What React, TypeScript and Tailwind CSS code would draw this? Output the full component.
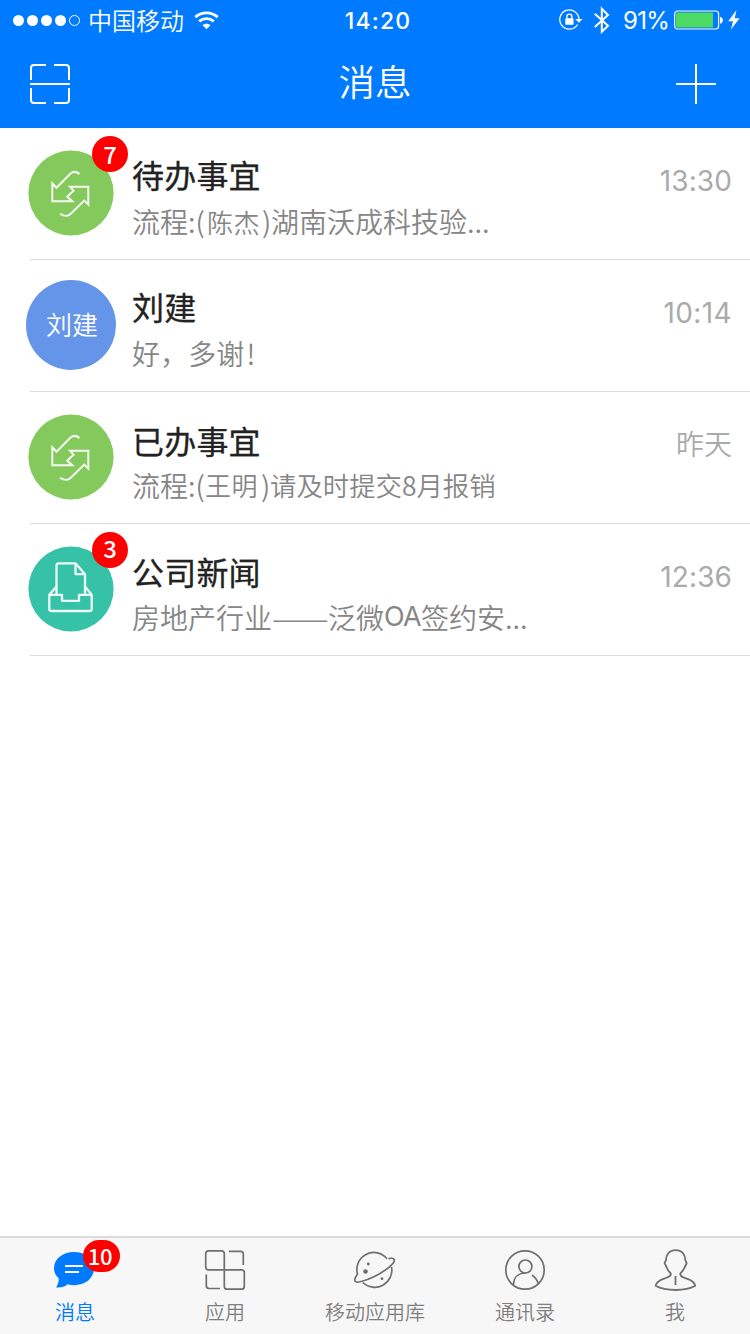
import type { ReactNode } from "react";

type Segment = { text: string; className: string };

type Message = {
  id: string;
  avatar: ReactNode;
  badge?: string;
  badgeClass?: string;
  title: string;
  titleClass: string;
  preview: Segment[];
  time: string;
  timeClass: string;
};

const CJK = "font-['Noto_Sans_CJK_SC',sans-serif]";

function SignalDots() {
  return (
    <svg width="68" height="12" viewBox="0 0 68 12" fill="white">
      <circle cx="5.5" cy="6.5" r="5.5" />
      <circle cx="19.5" cy="6.5" r="5.5" />
      <circle cx="33.5" cy="6.5" r="5.5" />
      <circle cx="47.5" cy="6.5" r="5.5" />
      <circle cx="61.5" cy="6.5" r="5" fill="none" stroke="white" strokeWidth="1" />
    </svg>
  );
}

function WifiIcon() {
  return (
    <svg width="25" height="19" viewBox="0 0 25 19" fill="none" stroke="white" strokeWidth="2.9">
      <path d="M1.3 6.1C7.7.4 17.3.4 23.7 6.1" />
      <path d="M5.2 10.4C9.5 6.7 15.5 6.7 19.8 10.4" />
      <path d="M12.5 18.2 8.5 14.2C10.8 12.2 14.2 12.2 16.5 14.2Z" fill="white" stroke="none" />
    </svg>
  );
}

function RotationLockIcon() {
  return (
    <svg width="24" height="22" viewBox="0 0 24 22" fill="none" stroke="white">
      <path d="M18.6 15.5A9.6 9.6 0 1 1 20 10.5" strokeWidth="1.3" />
      <path d="M16.2 10H23.6L19.9 13.8Z" fill="white" stroke="none" />
      <rect x="6.3" y="9.3" width="8.2" height="6.4" rx=".6" fill="white" stroke="none" />
      <path d="M7.9 9.5V7.7A2.5 2.6 0 0 1 12.9 7.7V9.5" strokeWidth="1.4" />
    </svg>
  );
}

function BluetoothIcon() {
  return (
    <svg width="16" height="28" viewBox="0 0 16 28" fill="none" stroke="white" strokeWidth="2">
      <path d="M.8 7.7 14 19.8 7.8 25.8V2.7L14 9 .8 21" />
    </svg>
  );
}

function BatteryIcon() {
  return (
    <svg width="49" height="20" viewBox="0 0 49 20" fill="none">
      <rect x=".6" y="1" width="44" height="18" rx="3" stroke="white" strokeWidth="1.2" />
      <rect x="2" y="2.5" width="37" height="15" rx="1" fill="#4cd964" />
      <path d="M46 6.7C49.8 7.2 49.8 13.2 46 13.7Z" fill="white" />
    </svg>
  );
}

function BoltIcon() {
  return (
    <svg width="12" height="20" viewBox="0 0 12 20" fill="white">
      <path d="M8.5 0 .2 11.2H5L3 19.5 11.6 8.2H6.7Z" />
    </svg>
  );
}

function ScanIcon() {
  return (
    <svg width="40" height="40" viewBox="0 0 40 40" fill="none" stroke="white" strokeWidth="2">
      <path d="M1 16V4Q1 1 4 1H16M24 1H36Q39 1 39 4V16M39 24V36Q39 39 36 39H24M16 39H4Q1 39 1 36V24M0 20H40" />
    </svg>
  );
}

function PlusIcon() {
  return (
    <svg width="40" height="40" viewBox="0 0 40 40" stroke="white" strokeWidth="2">
      <path d="M20 0V40M0 20H40" />
    </svg>
  );
}

function FlowAvatar() {
  return (
    <svg width="86" height="86" viewBox="0 0 86 86" fill="none">
      <circle cx="43" cy="43" r="42.6" fill="#84c95c" />
      <path
        d="M51.5 24C48.5 21.3 45.5 21.2 42.5 23.5L28.5 37.8 24.3 33.3V51.3H44.3L39.2 46.7 45.5 40.7 42 36.7H60.3V54.6L56.3 50.6 43 63.5C40 66.5 35.8 66.6 32.3 63.8"
        stroke="#f6fbf3"
        strokeWidth="2"
      />
    </svg>
  );
}

function NewsAvatar() {
  return (
    <svg width="86" height="86" viewBox="0 0 86 86" fill="none">
      <circle cx="43" cy="43" r="42.6" fill="#35c2a7" />
      <g stroke="#eefaf7" strokeWidth="2.3" strokeLinejoin="round">
        <path d="M28.5 48V19.5Q28.5 17.3 30.7 17.3H47.5L57 28.2V48M47.5 17.3V28.2H57" />
        <path d="M28.5 40.5 21.3 48.8V63Q21.3 65 23.3 65H61.7Q63.7 65 63.7 63V48.8L57 40.5M21.3 48.8H34V54.8H51V48.8H63.7" />
      </g>
    </svg>
  );
}

function NameAvatar() {
  return (
    <div
      className={`flex size-[90px] items-center justify-center rounded-full bg-[#6495e8] pt-px pl-[2px] text-[26px] leading-[34px] font-[350] text-white font-['Inter','Noto_Sans_CJK_SC',sans-serif]`}
    >
      刘建
    </div>
  );
}

const messages: Message[] = [
  {
    id: "todo",
    avatar: <FlowAvatar />,
    badge: "7",
    badgeClass: "pb-px",
    title: "待办事宜",
    titleClass: "pt-[28px]",
    preview: [
      { text: "流程:(", className: "w-[75px] text-[28px]" },
      { text: "陈杰", className: "w-[55px] text-[26px] tracking-[0.5px] pt-px" },
      { text: ")", className: "w-[9px] text-[28px]" },
      { text: "湖南沃成科技验...", className: "text-[28px]" },
    ],
    time: "13:30",
    timeClass: "text-[28px] font-normal tracking-[0.1px]",
  },
  {
    id: "liujian",
    avatar: <NameAvatar />,
    title: "刘建",
    titleClass: "pt-[28px]",
    preview: [
      { text: "好，多谢", className: "text-[28px] tracking-[0.1px]" },
      { text: "!", className: "pl-[2px] text-[28px]" },
    ],
    time: "10:14",
    timeClass: "text-[28px] font-normal tracking-[0.4px]",
  },
  {
    id: "done",
    avatar: <FlowAvatar />,
    title: "已办事宜",
    titleClass: "pt-[30px]",
    preview: [
      { text: "流程:(", className: "w-[73px] text-[28px]" },
      { text: "王明", className: "w-[56px] text-[26px] tracking-[0.5px]" },
      { text: ")", className: "w-[9px] text-[28px]" },
      { text: "请及时提交8月报销", className: "text-[26.4px]" },
    ],
    time: "昨天",
    timeClass: "text-[28px] font-[350]",
  },
  {
    id: "news",
    avatar: <NewsAvatar />,
    badge: "3",
    badgeClass: "pb-[5px]",
    title: "公司新闻",
    titleClass: "pt-[29px]",
    preview: [
      { text: "房地产行业", className: "text-[28px]" },
      { text: "——", className: "w-14 origin-left scale-x-[1.21] text-[28px]" },
      { text: "泛微", className: "text-[28px]" },
      { text: "OA", className: "w-[37px] font-['Inter',sans-serif] font-normal text-[27px] tracking-[-0.8px]" },
      { text: "签约安...", className: "text-[28px]" },
    ],
    time: "12:36",
    timeClass: "text-[28px] font-normal tracking-[0.1px]",
  },
];

function MessageRow({ message }: { message: Message }) {
  return (
    <li className="flex h-[132px] pl-[26px]">
      <div className="relative mt-5 flex size-[90px] shrink-0 items-center justify-center">
        {message.avatar}
        {message.badge && (
          <span
            className={`absolute -top-3 left-[66px] flex size-9 items-center justify-center rounded-full bg-[#ff0000] text-[24px] leading-9 font-medium text-white ${message.badgeClass} ${CJK}`}
          >
            {message.badge}
          </span>
        )}
      </div>
      <div className="relative flex min-w-0 flex-1 pl-4 after:absolute after:right-0 after:bottom-0 after:-left-[86px] after:h-px after:bg-[#dcdcdc]">
        <div className="relative min-w-0 flex-1">
          <h2
            className={`h-[73px] text-[32px] leading-[42px] font-normal tracking-[0.2px] text-[#222] [-webkit-text-stroke:0.3px_#222] ${message.titleClass} font-['Inter','Noto_Sans_CJK_SC',sans-serif]`}
          >
            {message.title}
          </h2>
          <p className={`flex h-10 items-center leading-10 font-[350] whitespace-nowrap text-[#868686] ${CJK}`}>
            {message.preview.map((segment) => (
              <span key={segment.text} className={segment.className}>
                {segment.text}
              </span>
            ))}
          </p>
        </div>
        <time
          className={`mt-[35px] mr-[18px] leading-9 text-[#aaa] font-['Inter','Noto_Sans_CJK_SC',sans-serif] ${message.timeClass}`}
        >
          {message.time}
        </time>
      </div>
    </li>
  );
}

function ChatIcon() {
  return (
    <svg width="42" height="42" viewBox="1 0 42 42" fill="none">
      <path
        d="M21 3C9.5 3 1 10 1 19.3C1 23.2 2.8 26.7 5.7 29.3C6 33 4.6 35.5 3.2 38.5C8 39 12 37.7 14.5 35.3C28.5 38.8 41 31 41 19.3C41 10 32.5 3 21 3Z"
        fill="#007aff"
      />
      <path d="M12 17H30M12 23H26" stroke="white" strokeWidth="1.8" />
    </svg>
  );
}

function AppsIcon() {
  return (
    <svg width="42" height="42" viewBox="0 0 42 42" fill="none" stroke="#6f6f6f" strokeWidth="1.7">
      <path d="M4.5 1.8H17.5Q20.3 1.8 20.3 4.6V20.8H4.5Q1.7 20.8 1.7 18V4.6Q1.7 1.8 4.5 1.8Z" />
      <path d="M20.3 20.8H37.5Q40.3 20.8 40.3 23.6V37.4Q40.3 40.2 37.5 40.2H23.1Q20.3 40.2 20.3 37.4Z" />
      <path d="M25 2.3H36.5Q39.3 2.3 39.3 5V16M2.3 25.5V36.5Q2.3 39.5 5 39.5H16" />
    </svg>
  );
}

function PlanetIcon() {
  return (
    <svg width="42" height="42" viewBox="0.5 -0.5 42 42" fill="none" stroke="#6f6f6f" strokeWidth="1.7">
      <path d="M33.5 9.2A17 17 0 0 0 4 24.6C2.2 27.2.9 30.2 1.4 31.4C1.9 34.1 11 31.8 21.5 26.7C33.5 20.6 41.7 13.3 40.8 10.2C40.3 8.6 38 8.5 35 9.2" strokeLinejoin="round" />
      <path d="M38 17.3A17.2 17.2 0 0 1 9.2 33" />
      <g fill="#6f6f6f" stroke="none">
        <circle cx="14.8" cy="14.5" r="1.4" />
        <circle cx="12" cy="22" r="2.3" />
        <circle cx="28.5" cy="29.2" r="1.4" />
      </g>
    </svg>
  );
}

function ContactsIcon() {
  return (
    <svg width="42" height="42" viewBox="0 0 42 42" fill="none" stroke="#6f6f6f" strokeWidth="1.7">
      <circle cx="21" cy="21" r="19.2" />
      <circle cx="21.4" cy="17.5" r="6.5" />
      <path d="M9.5 35.5C9.7 28 14.5 24.2 21 24M28.5 26.5C32 28.8 33.5 32 34.2 34.8" strokeLinecap="round" />
    </svg>
  );
}

function MeIcon() {
  return (
    <svg width="42" height="42" viewBox="0 0 42 42" fill="none" stroke="#6f6f6f" strokeWidth="1.8" strokeLinejoin="round">
      <path d="M21.7 1.2C14.7 1.2 11.9 6.5 11.9 11.3L10.6 14.2 12.5 18C13.6 20.9 15.4 23.2 16.9 24.7C16.9 27.5 14.5 28.2 11 29.3C6 30.8 2.3 32.5 1.6 36.8C7 39.8 14 41 21.7 41S36 39.8 41.2 36.8C40.4 32.5 37 30.8 32 29.3C28.5 28.2 26.4 27.5 26.2 24.7C28.1 22.7 29.8 20.5 30.8 18L32.7 14.2 31.4 11.3C31.4 6.5 28.7 1.2 21.7 1.2Z" />
      <path d="M21.5 27V36" />
    </svg>
  );
}

const tabs = [
  { label: "消息", icon: <ChatIcon />, active: true, badge: "10" },
  { label: "应用", icon: <AppsIcon /> },
  { label: "移动应用库", icon: <PlanetIcon /> },
  { label: "通讯录", icon: <ContactsIcon /> },
  { label: "我", icon: <MeIcon /> },
];

export default function App() {
  return (
    <div className="flex h-[1334px] w-[750px] flex-col overflow-hidden bg-white font-['Inter','Noto_Sans_CJK_SC',sans-serif]">
      <header className="h-32 shrink-0 bg-[#007aff] text-white">
        <div className="grid h-10 grid-cols-[1fr_auto_1fr] items-center">
          <div className="flex items-center pl-[13px]">
            <SignalDots />
            <span className="ml-[7px] pt-[3px] text-[24px] leading-[37px] font-[350]">中国移动</span>
            <span className="ml-[10px]">
              <WifiIcon />
            </span>
          </div>
          <span className="relative left-[3px] pt-[2px] text-[23px] leading-[38px] font-medium tracking-[1.2px]">14:20</span>
          <div className="flex items-center justify-end pr-[10px]">
            <RotationLockIcon />
            <span className="ml-[11px]">
              <BluetoothIcon />
            </span>
            <span className="ml-[13px] w-[45px] pt-[2px] text-[24px] leading-[38px] font-normal tracking-[-0.7px]">91%</span>
            <span className="ml-[6px]">
              <BatteryIcon />
            </span>
            <span className="ml-[5px]">
              <BoltIcon />
            </span>
          </div>
        </div>
        <div className="flex h-[88px] items-center justify-between pr-[34px] pl-[30px]">
          <ScanIcon />
          <h1 className="relative left-[2px] mb-[3px] text-[36.5px] leading-[48px] font-[350]">消息</h1>
          <PlusIcon />
        </div>
      </header>

      <main className="flex-1">
        <ul>
          {messages.map((message) => (
            <MessageRow key={message.id} message={message} />
          ))}
        </ul>
      </main>

      <nav className="grid h-[98px] shrink-0 grid-cols-5 border-t-2 border-[#dcdcdc] bg-[#f7f7f7]">
        {tabs.map((tab) => (
          <div
            key={tab.label}
            className={`flex flex-col items-center pt-[11px] ${tab.active ? "text-[#007aff]" : "text-[#7f7f7f]"}`}
          >
            <div className="relative">
              {tab.icon}
              {tab.badge && (
                <span
                  className={`absolute -top-[9px] left-[29px] flex h-8 w-[37px] items-center justify-center rounded-full bg-[#ff0000] pr-[3px] pb-px text-[22px] leading-[31px] font-medium tracking-[-0.4px] text-white ${CJK}`}
                >
                  {tab.badge}
                </span>
              )}
            </div>
            <span className="mt-[7px] text-[20px] leading-[30px] font-[350]">{tab.label}</span>
          </div>
        ))}
      </nav>
    </div>
  );
}
